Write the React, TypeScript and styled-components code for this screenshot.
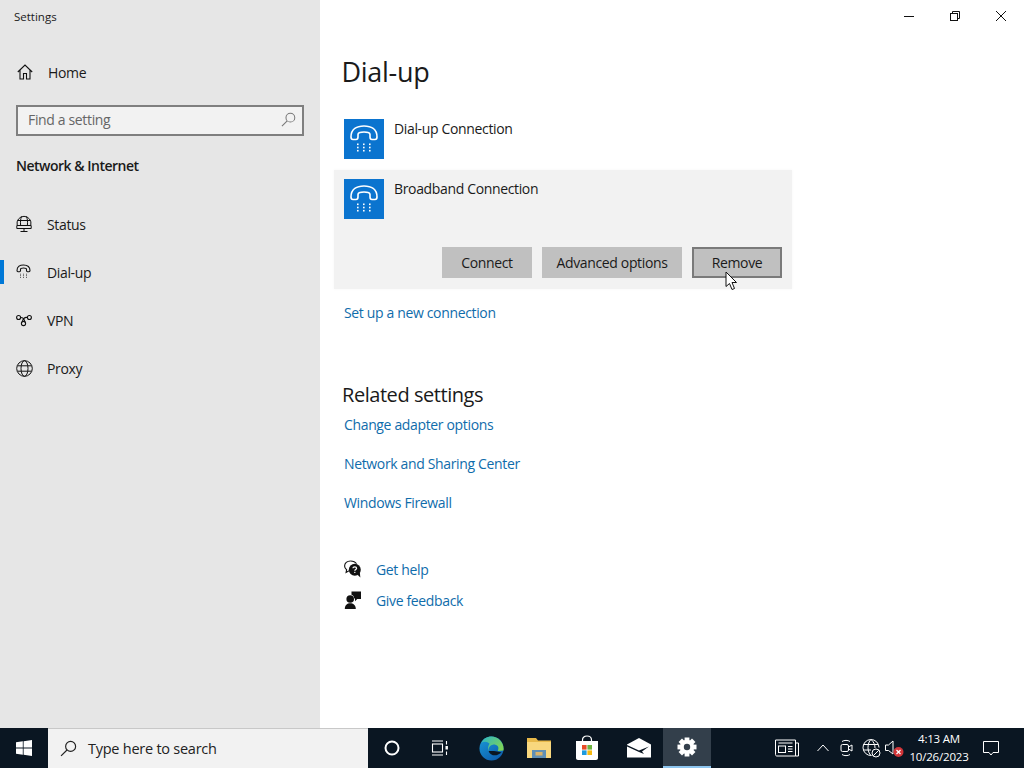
import React from "react";
import styled, { createGlobalStyle } from "styled-components";

const GlobalStyle = createGlobalStyle`
  html, body { margin: 0; padding: 0; background: #fff; }
  * { box-sizing: border-box; }
  svg { flex-shrink: 0; }
  body { font-family: "Open Sans", "Noto Sans", "Liberation Sans", sans-serif; color: #1a1a1a; }
`;

const Page = styled.div`
  position: relative;
  width: 1024px;
  height: 768px;
  overflow: hidden;
  display: flex;
  flex-direction: column;
`;

const Window = styled.div`
  flex: 1;
  display: flex;
  min-height: 0;
`;

const Sidebar = styled.aside`
  width: 320px;
  background: #e6e6e6;
  display: flex;
  flex-direction: column;
`;

const AppTitle = styled.div`
  height: 34px;
  padding: 9px 0 0 14px;
  font-size: 11.5px;
  line-height: 16px;
`;

const NavRow = styled.div<{ $active?: boolean }>`
  position: relative;
  height: 48px;
  display: flex;
  align-items: center;
  padding-left: 16px;
  font-size: 14px;
  letter-spacing: -0.35px;
  &::before {
    content: "";
    display: ${(p) => (p.$active ? "block" : "none")};
    position: absolute;
    left: 0;
    top: 12px;
    width: 4px;
    height: 24px;
    background: #0078d7;
  }
`;

const HomeRow = styled(NavRow)`
  margin-top: 14px;
  margin-bottom: 9px;
  gap: 16px;
  padding-left: 17px;
`;

const NavIcon = styled.span`
  width: 31px;
  height: 18px;
  display: flex;
  align-items: center;
  color: #111;
`;

const HomeIconSlot = styled.span`
  width: 15px;
  height: 16px;
  display: flex;
  align-items: center;
  color: #111;
`;

const SearchBox = styled.div`
  margin: 0 16px;
  height: 31px;
  border: 2px solid #7f7f7f;
  background: #f2f2f2;
  display: flex;
  align-items: center;
  justify-content: space-between;
  padding: 0 6px 2px 10px;
  font-size: 14px;
  letter-spacing: -0.35px;
  color: #666;
`;

const GroupTitle = styled.div`
  margin: 0 0 24px 16px;
  padding-top: 19px;
  height: 40px;
  font-size: 14px;
  line-height: 22px;
  font-weight: 600;
  letter-spacing: -0.5px;
`;

const Main = styled.main`
  flex: 1;
  background: #fff;
  display: flex;
  flex-direction: column;
`;

const TitleBar = styled.div`
  height: 32px;
  display: flex;
  justify-content: flex-end;
`;

const WinButton = styled.div`
  width: 46px;
  height: 32px;
  display: flex;
  align-items: center;
  justify-content: center;
  color: #111;
`;

const Content = styled.div`
  padding: 0 0 0 14px;
  display: flex;
  flex-direction: column;
`;

const PageTitle = styled.h1`
  margin: 18px 0 0 7.5px;
  height: 44px;
  font-size: 27px;
  line-height: 44px;
  font-weight: 400;
  letter-spacing: -0.3px;
`;

const ConnectionRow = styled.div`
  margin-top: 25px;
  padding-left: 10px;
  height: 40px;
  display: flex;
  gap: 10px;
  font-size: 14px;
  line-height: 20px;
  letter-spacing: -0.35px;
`;

const ConnectionPanel = styled.div`
  margin-top: 11px;
  width: 458px;
  height: 119px;
  background: #f2f2f2;
  box-shadow: 0 0 3px #f6f6f6;
  display: flex;
  flex-direction: column;
  padding: 9px 10px 0 10px;
  font-size: 14px;
  line-height: 20px;
  letter-spacing: -0.35px;
`;

const PanelTop = styled.div`
  display: flex;
  gap: 10px;
  height: 40px;
`;

const PhoneTile = styled.div`
  width: 40px;
  height: 40px;
  background: #0b74cf;
  color: #fff;
  display: flex;
  align-items: center;
  justify-content: center;
`;

const Actions = styled.div`
  margin-top: 28px;
  display: flex;
  justify-content: flex-end;
  gap: 10px;
`;

const ActionButton = styled.div<{ $w: number; $focus?: boolean }>`
  width: ${(p) => p.$w}px;
  height: 31px;
  background: #c0c0c0;
  border: 2px solid ${(p) => (p.$focus ? "#7a7a7a" : "#c0c0c0")};
  display: flex;
  align-items: center;
  justify-content: center;
  font-size: 14px;
  letter-spacing: -0.35px;
`;

const Link = styled.a<{ $h?: number }>`
  display: block;
  height: ${(p) => p.$h ?? 39}px;
  line-height: 20px;
  font-size: 14px;
  letter-spacing: -0.35px;
  color: #0f6cab;
  padding-left: 10px;
`;

const SetupLink = styled(Link)`
  margin-top: 14px;
`;

const SectionTitle = styled.h2`
  margin: 58px 0 0 8px;
  height: 30px;
  font-size: 20px;
  line-height: 28px;
  font-weight: 400;
  letter-spacing: -0.45px;
`;

const RelatedList = styled.div`
  padding-top: 4px;
`;

const HelpList = styled.div`
  margin-top: 46px;
  display: flex;
  flex-direction: column;
  gap: 11px;
`;

const HelpRow = styled.div`
  display: flex;
  align-items: center;
  padding-left: 10px;
  height: 20px;
  gap: 15px;
  font-size: 14px;
  letter-spacing: -0.35px;
  color: #0f6cab;
`;

const HelpIcon = styled.span`
  width: 17px;
  height: 18px;
  display: flex;
  align-items: center;
  justify-content: center;
`;

const Cursor = styled.svg`
  position: absolute;
  left: 725px;
  top: 271px;
`;

const Taskbar = styled.footer`
  height: 40px;
  padding-right: 13px;
  background: #0a1622;
  display: flex;
  color: #fff;
`;

const TaskSlot = styled.div<{ $w?: number; $active?: boolean }>`
  width: ${(p) => p.$w ?? 48}px;
  height: 40px;
  display: flex;
  align-items: center;
  justify-content: center;
  background: ${(p) => (p.$active ? "#333f4b" : "transparent")};
  border-bottom: ${(p) => (p.$active ? "2px solid #8cc4ee" : "none")};
`;

const TaskSearch = styled.div`
  width: 320px;
  height: 40px;
  background: #f2f2f2;
  border-top: 1px solid #c8c8c8;
  color: #222;
  display: flex;
  align-items: center;
  padding-left: 12px;
  gap: 11px;
  font-size: 14.5px;
  letter-spacing: -0.25px;
`;

const TaskSpacer = styled.div`
  flex: 1;
`;

const Clock = styled.div`
  width: 64px;
  text-align: center;
  font-size: 11.5px;
  line-height: 18px;
  padding-top: 2px;
  letter-spacing: -0.2px;
  white-space: nowrap;
`;

const PhoneGlyph = ({ size, width, box = "0 0 40 40" }: { size: number; width: number; box?: string }) => (
  <svg width={size} height={size} viewBox={box} fill="none" stroke="currentColor" strokeWidth={width}>
    <path d="M7 18 C7 10 13 7 20 7 S33 10 33 18 C33 20 32 20.5 31 20.5 H28 C26.5 20.5 26 19.5 26 18 V15.5 C26 14 23 13 20 13 S14 14 14 15.5 V18 C14 19.5 13.5 20.5 12 20.5 H9 C8 20.5 7 20 7 18 Z" />
    <g fill="currentColor" stroke="none">
      {[0, 1, 2].map((r) =>
        [0, 1, 2].map((c) => <rect key={`${r}${c}`} x={13 + c * 6} y={24.5 + r * 3.2} width="1.6" height="1.6" />)
      )}
    </g>
  </svg>
);

const TilePhone = () => (
  <PhoneTile>
    <PhoneGlyph size={40} width={1.6} />
  </PhoneTile>
);

const HomeIcon = () => (
  <svg width="16" height="16" viewBox="0 0 16 16" fill="none" stroke="currentColor" strokeWidth="1.1">
    <path d="M0.8 8 L8 1 L15.2 8 M3 6.2 V15 H6.5 V9.5 H9.5 V15 H13 V6.2" />
  </svg>
);

const StatusIcon = () => (
  <svg width="16" height="18" viewBox="0 0 16 18" fill="none" stroke="currentColor" strokeWidth="1">
    <path d="M1.2 10 A7 7 0 1 1 14.8 10 M5.5 1.5 C4.5 4 4.3 7 4.6 10 M10.5 1.5 C11.5 4 11.7 7 11.4 10 M1.5 5.5 H14.5 M0.8 10.5 H15.2 V13.5 H0.8 Z M8 13.5 V16 M4.5 16.5 H11.5" />
  </svg>
);

const VpnIcon = () => (
  <svg width="16" height="16" viewBox="0 0 16 16" fill="none" stroke="currentColor" strokeWidth="1.1">
    <circle cx="2.6" cy="5.5" r="2" />
    <circle cx="13.4" cy="5.5" r="2" />
    <circle cx="7.5" cy="11.5" r="2.1" />
    <path d="M4.6 5.5 C6.5 5.5 8.5 7.2 9 10.2 M6.2 9.8 C7 7 9 5 11.4 5.5" />
  </svg>
);

const GlobeIcon = () => (
  <svg width="17" height="17" viewBox="0 0 17 17" fill="none" stroke="currentColor" strokeWidth="1">
    <circle cx="8.5" cy="8.5" r="7.8" />
    <ellipse cx="8.5" cy="8.5" rx="3.5" ry="7.8" />
    <path d="M1.5 5.8 H15.5 M1.5 11.2 H15.5" />
  </svg>
);

const SearchIcon = ({ size, color }: { size: number; color: string }) => (
  <svg width={size} height={size} viewBox="0 0 16 16" fill="none" stroke={color} strokeWidth="1.1">
    <circle cx="10" cy="6" r="4.7" />
    <path d="M6.6 9.4 L1 15" />
  </svg>
);

const HelpGlyph = () => (
  <svg width="18" height="18" viewBox="0 0 18 18">
    <path d="M6.5 1 C3 1 0.6 3.2 0.6 6 C0.6 7.6 1.4 8.9 2.6 9.7 L2.1 12.5 L5 10.8" fill="none" stroke="#111" strokeWidth="1.1" />
    <path d="M6.5 1 C9.2 1 11.4 2 12.5 3.8" fill="none" stroke="#111" strokeWidth="1.1" />
    <circle cx="10.8" cy="9.8" r="6" fill="#111" />
    <path d="M13.2 14.5 L16.4 17.4 L15.8 12.5 Z" fill="#111" />
    <path d="M8.9 8.2 C8.9 6.4 12.6 6.4 12.6 8.2 C12.6 9.5 10.8 9.4 10.8 10.8" fill="none" stroke="#fff" strokeWidth="1.2" />
    <rect x="10.2" y="11.8" width="1.2" height="1.2" fill="#fff" />
  </svg>
);

const FeedbackGlyph = () => (
  <svg width="18" height="18" viewBox="0 0 18 18" fill="#111">
    <circle cx="6.2" cy="8" r="3.8" />
    <path d="M0.8 18 C0.8 14 3.2 12.2 6.2 12.2 S11.8 14 11.8 18 Z" />
    <path d="M7.5 0.6 H17 V8 H13.2 L11 10.2 V7.6 H10.2 C10.2 5.6 9 4.2 7.5 3.8 Z" />
  </svg>
);

const StartLogo = () => (
  <svg width="16" height="16" viewBox="0 0 16 16" fill="#fff">
    <path d="M0 2.3 L6.8 1.3 V7.5 H0 Z M7.6 1.2 L16 0 V7.5 H7.6 Z M0 8.4 H6.8 V14.7 L0 13.7 Z M7.6 8.4 H16 V16 L7.6 14.8 Z" />
  </svg>
);

const TaskViewIcon = () => (
  <svg width="18" height="18" viewBox="0 0 18 18" fill="none" stroke="#fff" strokeWidth="1.1">
    <path d="M1 2 H12 M1 16 H12" />
    <rect x="1.5" y="5" width="10" height="8" />
    <path d="M15.5 2 V5.5 M15.5 12.5 V16" />
    <rect x="14.5" y="7" width="2.4" height="3.5" fill="#fff" stroke="none" />
  </svg>
);

const EdgeIcon = () => (
  <svg width="25" height="25" viewBox="0 0 26 26">
    <defs>
      <linearGradient id="edgeA" x1="0" y1="0" x2="0.7" y2="1">
        <stop offset="0" stopColor="#1a9ad6" />
        <stop offset="1" stopColor="#0d5fb0" />
      </linearGradient>
      <linearGradient id="edgeB" x1="0" y1="0" x2="1" y2="0.6">
        <stop offset="0" stopColor="#2bb5c8" />
        <stop offset="1" stopColor="#7bd35a" />
      </linearGradient>
    </defs>
    <circle cx="13" cy="13" r="12.5" fill="url(#edgeA)" />
    <path d="M10 16 C9.5 11 13 8.5 17 9 C20 9.5 21 12 19.5 15.5 L25.5 15 C26.5 7 20 0.5 13 0.5 C8 0.5 4 3 2.5 7 C6 5 9 6 11 8 C9.5 10 9 13 10 16 Z" fill="url(#edgeB)" />
    <path d="M10 15.5 C11 19 14.5 20.5 18 20 C20 19.6 22 18.5 23.5 17 C23 17 19 15.5 13.5 15.5 Z" fill="#0a1622" />
  </svg>
);

const FolderIcon = () => (
  <svg width="24" height="22" viewBox="0 0 24 22">
    <path d="M0 1 H9 L11 3.5 H24 V21 H0 Z" fill="#e8b94a" />
    <rect x="0" y="5" width="24" height="16" fill="#f8d77e" />
    <rect x="5" y="13" width="14" height="8" fill="#5f8fb5" />
    <rect x="8.5" y="15" width="7" height="3.5" fill="#d9b36a" />
  </svg>
);

const StoreIcon = () => (
  <svg width="24" height="26" viewBox="0 0 24 26">
    <path d="M7.5 7 V5 C7.5 2.5 9.5 1 12 1 S16.5 2.5 16.5 5 V7" fill="none" stroke="#fff" strokeWidth="1.2" />
    <path d="M1 6 H23 V23 C23 24.2 22.2 25 21 25 H3 C1.8 25 1 24.2 1 23 Z" fill="#fff" />
    <rect x="7" y="10" width="4.6" height="4.6" fill="#e74c28" />
    <rect x="12.4" y="10" width="4.6" height="4.6" fill="#6cb33f" />
    <rect x="7" y="15.4" width="4.6" height="4.6" fill="#1f9bde" />
    <rect x="12.4" y="15.4" width="4.6" height="4.6" fill="#f7b90f" />
  </svg>
);

const MailIcon = () => (
  <svg width="24" height="20" viewBox="0 0 24 20" fill="#fff">
    <path d="M12 0 L24 6.5 V19.5 H0 V6.5 Z" />
    <path d="M0 7 L12 12.5 L22 8.5 L15 13.5 L17 16 L12 14 L0 8.5 Z" fill="#0a1622" />
  </svg>
);

const GearIcon = () => (
  <svg width="20" height="20" viewBox="0 0 20 20">
    <g fill="#fff">
      {[0, 45, 90, 135].map((a) => (
        <rect key={a} x="7.6" y="0.5" width="4.8" height="19" transform={`rotate(${a} 10 10)`} />
      ))}
      <circle cx="10" cy="10" r="7.2" />
    </g>
    <circle cx="10" cy="10" r="3.2" fill="#333f4b" />
  </svg>
);

const NewsIcon = () => (
  <svg width="24" height="18" viewBox="0 0 24 18" fill="none" stroke="#fff" strokeWidth="1">
    <path d="M0.5 1 H20.5 V17 H2 C1 17 0.5 16.5 0.5 15.5 Z M20.5 4 H23.5 V17 H20.5" />
    <rect x="3.5" y="7" width="7" height="6.5" />
    <path d="M3.5 4 H17.5 M13 7.5 H17.5 M13 10 H17.5 M13 12.5 H17.5" />
  </svg>
);

const MeetIcon = () => (
  <svg width="16" height="18" viewBox="0 0 16 18" fill="none" stroke="#fff" strokeWidth="1">
    <rect x="2" y="5.5" width="7.5" height="7" rx="1.5" />
    <path d="M9.5 8 L13 6 V12 L9.5 10" />
    <path d="M3 2.5 C5 1 9 1 11 2.5 M3 15.5 C5 17 9 17 11 15.5" />
  </svg>
);

const TrayGlobe = () => (
  <svg width="20" height="20" viewBox="0 0 20 20" fill="none" stroke="#fff" strokeWidth="1">
    <path d="M10.5 17.5 A8 8 0 1 1 18 9.5" />
    <path d="M10 1.5 C6 5 6 14 10 17.5 M10 1.5 C13 4 14 7 14 10 M2.5 6.5 H17 M2.5 12 H10" />
    <circle cx="15" cy="15" r="4" />
    <path d="M12.2 17.8 L17.8 12.2" />
  </svg>
);

const SoundMuted = () => (
  <svg width="22" height="20" viewBox="0 0 22 20">
    <path d="M1.5 7 H4.5 L9 3 V16 L4.5 12.5 H1.5 Z" fill="none" stroke="#fff" strokeWidth="1" />
    <circle cx="14.5" cy="14" r="5" fill="#d13438" />
    <path d="M12.5 12 L16.5 16 M16.5 12 L12.5 16" stroke="#fff" strokeWidth="1.2" />
  </svg>
);

const App = () => (
  <Page>
    <GlobalStyle />
    <Window>
      <Sidebar>
        <AppTitle>Settings</AppTitle>
        <HomeRow>
          <HomeIconSlot><HomeIcon /></HomeIconSlot>
          Home
        </HomeRow>
        <SearchBox>
          Find a setting
          <SearchIcon size={15} color="#777" />
        </SearchBox>
        <GroupTitle>Network &amp; Internet</GroupTitle>
        <NavRow>
          <NavIcon><StatusIcon /></NavIcon>
          Status
        </NavRow>
        <NavRow $active>
          <NavIcon><PhoneGlyph size={16} width={2.2} box="5 5 32 32" /></NavIcon>
          Dial-up
        </NavRow>
        <NavRow>
          <NavIcon><VpnIcon /></NavIcon>
          VPN
        </NavRow>
        <NavRow>
          <NavIcon><GlobeIcon /></NavIcon>
          Proxy
        </NavRow>
      </Sidebar>
      <Main>
        <TitleBar>
          <WinButton>
            <svg width="12" height="12" viewBox="0 0 12 12" stroke="currentColor"><path d="M1 6.5 H11" /></svg>
          </WinButton>
          <WinButton>
            <svg width="12" height="12" viewBox="0 0 12 12" fill="none" stroke="currentColor"><rect x="1.5" y="3.5" width="7" height="7" /><path d="M3.5 3.5 V1.5 H10.5 V8.5 H8.5" /></svg>
          </WinButton>
          <WinButton>
            <svg width="12" height="12" viewBox="0 0 12 12" stroke="currentColor"><path d="M1 1 L11 11 M11 1 L1 11" /></svg>
          </WinButton>
        </TitleBar>
        <Content>
          <PageTitle>Dial-up</PageTitle>
          <ConnectionRow>
            <TilePhone />
            Dial-up Connection
          </ConnectionRow>
          <ConnectionPanel>
            <PanelTop>
              <TilePhone />
              Broadband Connection
            </PanelTop>
            <Actions>
              <ActionButton $w={90}>Connect</ActionButton>
              <ActionButton $w={140}>Advanced options</ActionButton>
              <ActionButton $w={90} $focus>Remove</ActionButton>
            </Actions>
          </ConnectionPanel>
          <SetupLink $h={20}>Set up a new connection</SetupLink>
          <SectionTitle>Related settings</SectionTitle>
          <RelatedList>
            <Link>Change adapter options</Link>
            <Link>Network and Sharing Center</Link>
            <Link $h={20}>Windows Firewall</Link>
          </RelatedList>
          <HelpList>
            <HelpRow>
              <HelpIcon><HelpGlyph /></HelpIcon>
              Get help
            </HelpRow>
            <HelpRow>
              <HelpIcon><FeedbackGlyph /></HelpIcon>
              Give feedback
            </HelpRow>
          </HelpList>
        </Content>
      </Main>
    </Window>
    <Taskbar>
      <TaskSlot><StartLogo /></TaskSlot>
      <TaskSearch>
        <SearchIcon size={17} color="#222" />
        Type here to search
      </TaskSearch>
      <TaskSlot>
        <svg width="16" height="16" viewBox="0 0 16 16" fill="none" stroke="#fff" strokeWidth="2"><circle cx="8" cy="8" r="6.5" /></svg>
      </TaskSlot>
      <TaskSlot><TaskViewIcon /></TaskSlot>
      <TaskSlot $w={54}><EdgeIcon /></TaskSlot>
      <TaskSlot $w={42}><FolderIcon /></TaskSlot>
      <TaskSlot $w={54}><StoreIcon /></TaskSlot>
      <TaskSlot $w={49}><MailIcon /></TaskSlot>
      <TaskSlot $active><GearIcon /></TaskSlot>
      <TaskSpacer />
      <TaskSlot><NewsIcon /></TaskSlot>
      <TaskSlot $w={24}>
        <svg width="12" height="8" viewBox="0 0 12 8" fill="none" stroke="#fff"><path d="M0.5 7 L6 1 L11.5 7" /></svg>
      </TaskSlot>
      <TaskSlot $w={24}><MeetIcon /></TaskSlot>
      <TaskSlot $w={24}><TrayGlobe /></TaskSlot>
      <TaskSlot $w={24}><SoundMuted /></TaskSlot>
      <Clock>4:13 AM<br />10/26/2023</Clock>
      <TaskSlot $w={40}>
        <svg width="16" height="16" viewBox="0 0 16 16" fill="none" stroke="#fff"><path d="M0.5 1.5 H15.5 V12.5 H10 L8 15 L6 12.5 H0.5 Z" /></svg>
      </TaskSlot>
    </Taskbar>
    <Cursor width="13" height="20" viewBox="0 0 13 20">
      <path d="M1 1 V15.5 L4.5 12.5 L7 18.5 L9.5 17.5 L7 11.5 H11.5 Z" fill="#fff" stroke="#111" strokeWidth="1" />
    </Cursor>
  </Page>
);

export default App;
